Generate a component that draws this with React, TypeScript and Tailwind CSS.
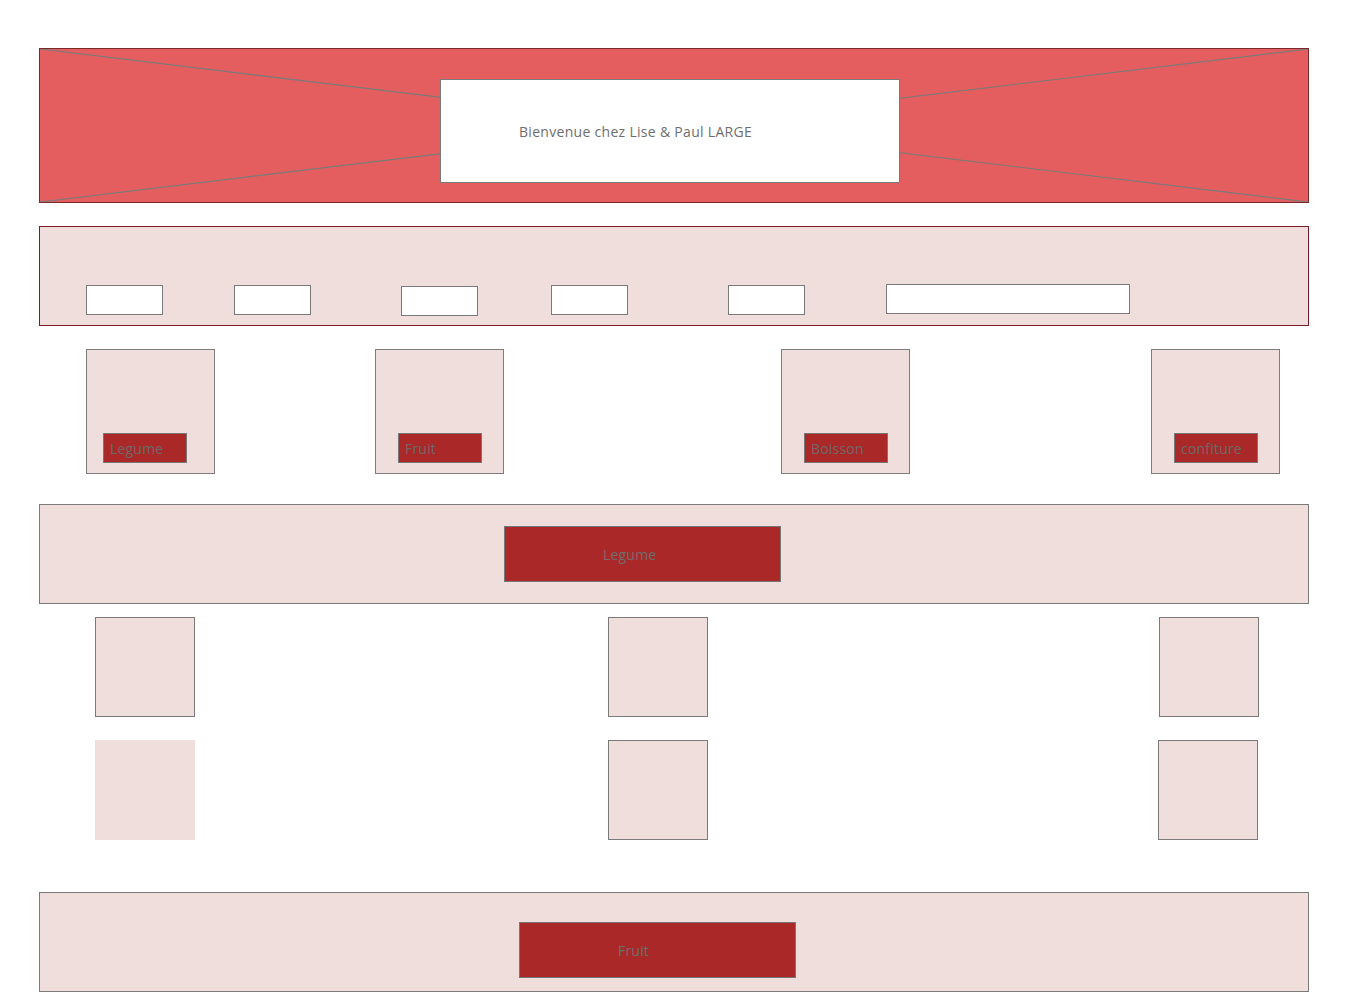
import React from "react";

const font = { fontFamily: '"Open Sans", "Liberation Sans", sans-serif' };

function Input({ w, ml, mt }: { w: string; ml: string; mt: string }) {
  return <div className={`${w} ${ml} ${mt} h-[30px] shrink-0 bg-white border border-[#7a7a7a]`} />;
}

function Card({ label, ml, pl }: { label: string; ml: string; pl: string }) {
  return (
    <div className={`${ml} w-[129px] h-[125px] shrink-0 bg-[#f0dedd] border border-[#7d7d7d] flex flex-col ${pl} pt-[83px]`}>
      <div className="w-[84px] h-[30px] bg-[#ab2829] border border-[#777] flex items-center pl-[6px] pt-[1px] text-[14px] text-[#6a6a6a] leading-none tracking-[0.2px]">
        {label}
      </div>
    </div>
  );
}

function Box({ ml, bordered = true }: { ml: string; bordered?: boolean }) {
  return (
    <div
      className={`${ml} w-[100px] h-[100px] shrink-0 bg-[#f0dedd] ${bordered ? "border border-[#7a7a7a]" : ""}`}
    />
  );
}

function Bar({ label, ml, mt, top }: { label: string; ml: string; mt: string; top: string }) {
  return (
    <div className={`${top} w-[1270px] h-[100px] bg-[#f0dedd] border border-[#7a7a7a] flex items-start`}>
      <div className={`${ml} ${mt} w-[277px] h-[56px] bg-[#ab2829] border border-[#777] flex items-center pl-[98px] pt-[1px] text-[14px] text-[#6e6e6e] leading-none tracking-[0.2px]`}>
        {label}
      </div>
    </div>
  );
}

export default function App() {
  return (
    <div className="w-[1350px] min-h-[1008px] bg-white pt-[48px] pl-[39px]" style={font}>
      {/* Header */}
      <div className="relative w-[1270px] h-[155px] bg-[#e55e5f] border border-[#7b2a2c] flex items-start">
        <svg className="absolute inset-0 w-full h-full" viewBox="0 0 100 100" preserveAspectRatio="none">
          <line x1="0" y1="0" x2="100" y2="100" stroke="#7a7a7a" strokeWidth="1.2" vectorEffect="non-scaling-stroke" />
          <line x1="0" y1="100" x2="100" y2="0" stroke="#7a7a7a" strokeWidth="1.2" vectorEffect="non-scaling-stroke" />
        </svg>
        <div className="relative ml-[400px] mt-[30px] w-[460px] h-[104px] bg-white border border-[#7a7a7a] flex items-center pl-[78px] pt-[1px] text-[14px] text-[#6e6e6e] leading-none tracking-[0.3px]">
          Bienvenue chez Lise &amp; Paul LARGE
        </div>
      </div>

      {/* Nav */}
      <div className="mt-[23px] w-[1270px] h-[100px] bg-[#f0dedd] border border-[#7a1c26] flex items-start">
        <Input w="w-[77px]" ml="ml-[46px]" mt="mt-[58px]" />
        <Input w="w-[77px]" ml="ml-[71px]" mt="mt-[58px]" />
        <Input w="w-[77px]" ml="ml-[90px]" mt="mt-[59px]" />
        <Input w="w-[77px]" ml="ml-[73px]" mt="mt-[58px]" />
        <Input w="w-[77px]" ml="ml-[100px]" mt="mt-[58px]" />
        <Input w="w-[244px]" ml="ml-[81px]" mt="mt-[57px]" />
      </div>

      {/* Categories */}
      <div className="mt-[23px] flex items-start">
        <Card label="Legume" ml="ml-[47px]" pl="pl-[16px]" />
        <Card label="Fruit" ml="ml-[160px]" pl="pl-[22px]" />
        <Card label="Boisson" ml="ml-[277px]" pl="pl-[22px]" />
        <Card label="confiture" ml="ml-[241px]" pl="pl-[22px]" />
      </div>

      {/* Section Legume */}
      <Bar label="Legume" top="mt-[30px]" ml="ml-[464px]" mt="mt-[21px]" />

      {/* Products */}
      <div className="mt-[13px] flex items-start">
        <Box ml="ml-[56px]" />
        <Box ml="ml-[413px]" />
        <Box ml="ml-[451px]" />
      </div>
      <div className="mt-[23px] flex items-start">
        <Box ml="ml-[56px]" bordered={false} />
        <Box ml="ml-[413px]" />
        <Box ml="ml-[450px]" />
      </div>

      {/* Section Fruit */}
      <Bar label="Fruit" top="mt-[52px]" ml="ml-[479px]" mt="mt-[29px]" />
    </div>
  );
}
